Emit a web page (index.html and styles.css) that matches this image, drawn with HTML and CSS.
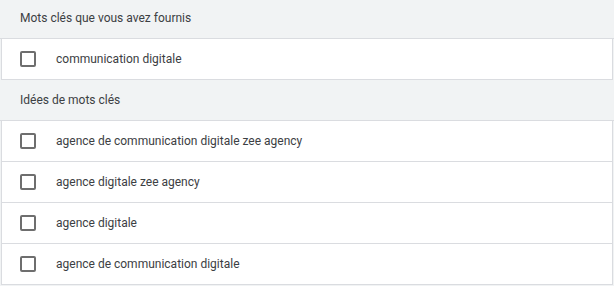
FILE: index.html
```html
<!DOCTYPE html>
<html lang="fr">
<head>
<meta charset="utf-8">
<link rel="stylesheet" href="styles.css">
</head>
<body>
<div class="list">
  <div class="group first">Mots clés que vous avez fournis</div>
  <div class="row"><span class="cb"></span><span class="label">communication digitale</span></div>
  <div class="group">Idées de mots clés</div>
  <div class="row"><span class="cb"></span><span class="label">agence de communication digitale zee agency</span></div>
  <div class="row"><span class="cb"></span><span class="label">agence digitale zee agency</span></div>
  <div class="row"><span class="cb"></span><span class="label">agence digitale</span></div>
  <div class="row"><span class="cb"></span><span class="label">agence de communication digitale</span></div>
</div>
</body>
</html>
```

FILE: styles.css
```css
html, body {
  margin: 0;
  padding: 0;
  background: #f1f3f4;
}
body {
  font-family: Roboto, "Liberation Sans", Arial, sans-serif;
  font-size: 12px;
  color: #3c4043;
  width: 614px;
  height: 286px;
  overflow: hidden;
}
.list {
  display: flex;
  flex-direction: column;
}
.group {
  height: 40px;
  display: flex;
  align-items: center;
  padding-left: 20px;
  border-bottom: 1px solid #dadce0;
  background: #f1f3f4;
  color: #3c4043;
}
.group.first {
  box-sizing: border-box;
  height: 39px;
  padding-bottom: 2px;
}
.row {
  height: 40px;
  margin: 0 1px;
  background: #fff;
  border-left: 1px solid #dadce0;
  border-right: 1px solid #dadce0;
  border-bottom: 1px solid #dadce0;
  display: flex;
  align-items: center;
  padding-left: 18px;
  width: 592px;
}
.cb {
  width: 12px;
  height: 12px;
  border: 2px solid #6e6e6e;
  border-radius: 2px;
  flex: none;
}
.label {
  margin-left: 20px;
  color: #3c4043;
}
```
